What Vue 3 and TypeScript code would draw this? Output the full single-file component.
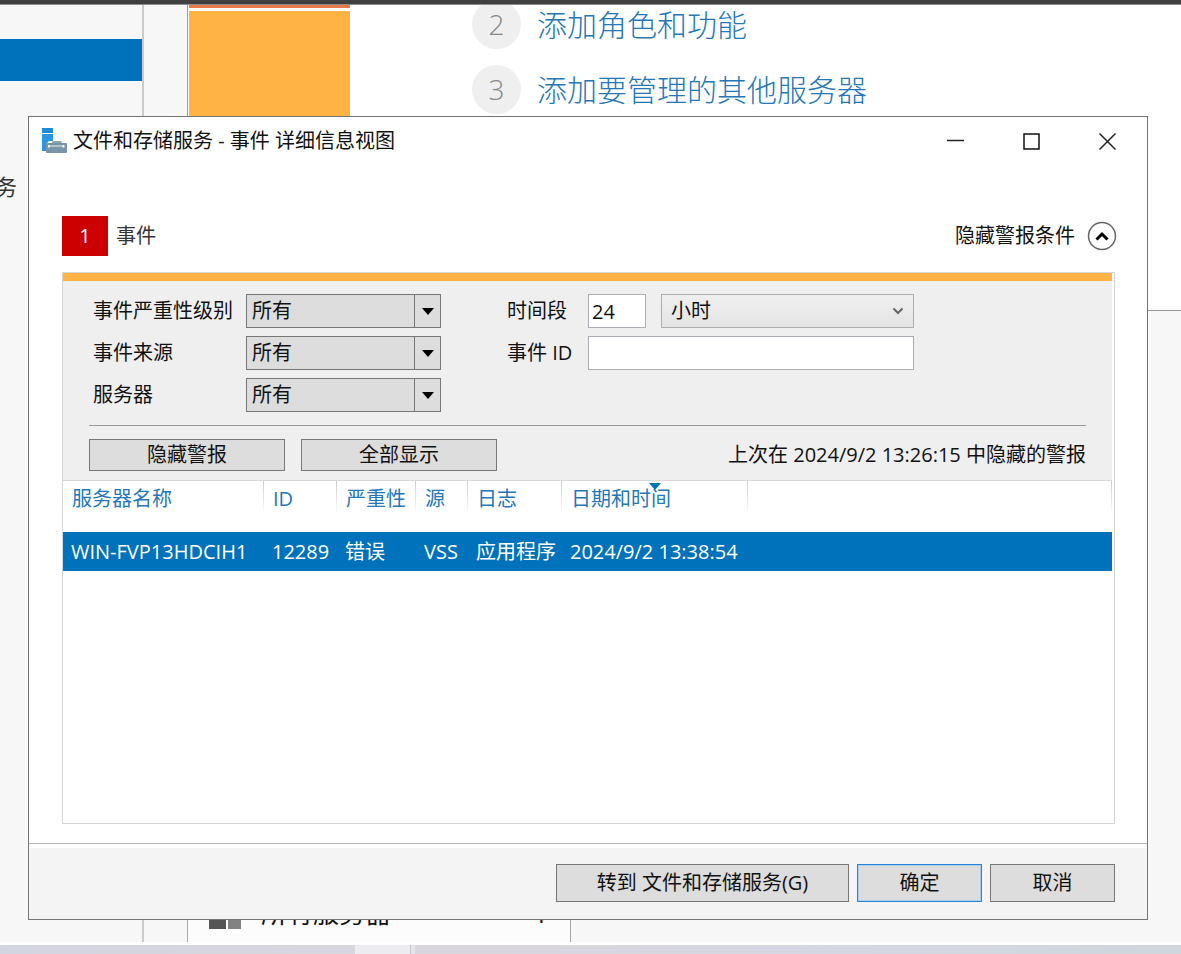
<script setup lang="ts">
import { ref } from 'vue'

interface EventRow {
  server: string
  id: number
  severity: string
  source: string
  log: string
  time: string
}

const filters = [
  { id: 'severity', label: '事件严重性级别' },
  { id: 'source', label: '事件来源' },
  { id: 'server', label: '服务器' },
]
const steps = [
  { n: 2, text: '添加角色和功能' },
  { n: 3, text: '添加要管理的其他服务器' },
]
const rows: EventRow[] = [
  { server: 'WIN-FVP13HDCIH1', id: 12289, severity: '错误', source: 'VSS', log: '应用程序', time: '2024/9/2 13:38:54' },
]
const amount = ref('24')
const eventId = ref('')
</script>

<template>
  <div class="screen">
    <div class="topbar"></div>
    <div class="manager">
      <nav class="side">
        <div class="side-active"></div>
        <div class="side-item">务</div>
      </nav>
      <main class="dashboard">
        <section class="welcome">
          <div class="tiles">
            <div class="tile-red"></div>
            <div class="tile-orange"></div>
          </div>
          <ol class="steps">
            <li v-for="s in steps" :key="s.n">
              <span class="num">{{ s.n }}</span>
              <a href="#">{{ s.text }}</a>
            </li>
          </ol>
        </section>
        <section class="card">
          <svg width="32" height="32" viewBox="0 0 32 32" aria-hidden="true">
            <path d="M0 0h17v32H0z" fill="#555" />
            <path d="M19 0h13v32H19z" fill="#828282" />
          </svg>
          <span class="card-name">所有服务器</span>
          <span class="card-count">1</span>
        </section>
      </main>
    </div>
    <div class="taskbar"><div class="task"></div></div>

    <div class="dialog" role="dialog" aria-labelledby="dlg-title">
      <header class="titlebar">
        <svg class="app-icon" width="27" height="27" viewBox="0 0 27 27" aria-hidden="true">
          <path d="M1 0h11v5H1z" fill="#1f8ad6" />
          <path d="M1 6h11v7H8l-3 3v7H1z" fill="#2b95e0" />
          <path d="M11 15c0-1.500 1-2 2-2h6c1 0 2 .5 2 2z" fill="#8fa5b2" />
          <rect x="5" y="15" width="21" height="10" rx="1" fill="#7896a6" />
          <path d="M8 18h15" stroke="#c3d0d8" stroke-width="1.500" />
          <path d="M7 17h2v2.500H7zM21.500 17h2v2.500h-2z" fill="#f2f6f8" />
        </svg>
        <h1 id="dlg-title">文件和存储服务 - 事件 详细信息视图</h1>
        <div class="win-buttons">
          <button type="button" aria-label="最小化">
            <svg width="17" height="17" viewBox="0 0 17 17"><path d="M0 7.500h17" stroke="#222" stroke-width="1.500" /></svg>
          </button>
          <button type="button" aria-label="最大化">
            <svg width="17" height="17" viewBox="0 0 17 17"><path d="M1 1h15v15H1z" fill="none" stroke="#111" stroke-width="1.500" /></svg>
          </button>
          <button type="button" aria-label="关闭">
            <svg width="17" height="17" viewBox="0 0 17 17"><path d="M.5.5l16 16M16.500.5l-16 16" stroke="#222" stroke-width="1.500" /></svg>
          </button>
        </div>
      </header>

      <div class="body">
        <div class="summary">
          <span class="badge">1</span>
          <h2>事件</h2>
          <button type="button" class="toggle">
            隐藏警报条件
            <svg width="30" height="30" viewBox="0 0 30 30" aria-hidden="true">
              <circle cx="15" cy="15" r="13.500" fill="#fff" stroke="#666" stroke-width="1.500" />
              <path d="M9.500 18.500l5.500-5.500 5.500 5.500" fill="none" stroke="#000" stroke-width="3" />
            </svg>
          </button>
        </div>

        <div class="panel">
          <form class="filter" @submit.prevent>
            <div class="fields">
              <div class="col-left">
                <template v-for="f in filters" :key="f.id">
                  <label :for="f.id">{{ f.label }}</label>
                  <div class="combo">
                    <select :id="f.id"><option>所有</option></select>
                    <span class="drop">
                      <svg width="12" height="7" viewBox="0 0 12 7" aria-hidden="true"><path d="M0 0h12L6 7z" fill="#000" /></svg>
                    </span>
                  </div>
                </template>
              </div>
              <div class="col-right">
                <label for="amount">时间段</label>
                <input id="amount" v-model="amount" type="text" class="box" />
                <div class="combo soft">
                  <select aria-label="时间单位"><option>小时</option></select>
                  <span class="drop">
                    <svg width="12" height="8" viewBox="0 0 12 8" aria-hidden="true"><path d="M1.500 1.500L6 6l4.500-4.500" fill="none" stroke="#666" stroke-width="2" /></svg>
                  </span>
                </div>
                <label for="eid">事件 ID</label>
                <input id="eid" v-model="eventId" type="text" class="box wide" />
              </div>
            </div>
            <div class="actions">
              <button type="button" class="btn">隐藏警报</button>
              <button type="button" class="btn">全部显示</button>
              <p>上次在 2024/9/2 13:26:15 中隐藏的警报</p>
            </div>
          </form>

          <table>
            <colgroup>
              <col class="c-server" /><col class="c-id" /><col class="c-sev" /><col class="c-src" />
              <col class="c-log" /><col class="c-time" /><col />
            </colgroup>
            <thead>
              <tr>
                <th scope="col">服务器名称</th>
                <th scope="col">ID</th>
                <th scope="col">严重性</th>
                <th scope="col">源</th>
                <th scope="col">日志</th>
                <th scope="col" aria-sort="descending">
                  日期和时间
                  <svg class="sort" width="12" height="7" viewBox="0 0 12 7" aria-hidden="true"><path d="M0 0h12L6 7z" fill="#0072bc" /></svg>
                </th>
                <th></th>
              </tr>
            </thead>
            <tbody>
              <tr v-for="r in rows" :key="r.id">
                <td>{{ r.server }}</td>
                <td>{{ r.id }}</td>
                <td>{{ r.severity }}</td>
                <td>{{ r.source }}</td>
                <td>{{ r.log }}</td>
                <td>{{ r.time }}</td>
                <td></td>
              </tr>
            </tbody>
          </table>
        </div>
      </div>

      <footer class="footer">
        <button type="button" class="btn goto">转到 文件和存储服务(G)</button>
        <button type="button" class="btn primary">确定</button>
        <button type="button" class="btn">取消</button>
      </footer>
    </div>
  </div>
</template>

<style>
body {
  margin: 0;
}
</style>

<style scoped>
* {
  box-sizing: border-box;
}
.screen {
  position: relative;
  display: flex;
  flex-direction: column;
  height: 100vh;
  overflow: hidden;
  background: #fff;
  color: #111;
  font: 20px/28px 'Open Sans', 'Noto Sans CJK SC', sans-serif;
}
.topbar {
  height: 5px;
  background: #404040;
  border-bottom: 1px solid #8c8c8c;
}
.manager {
  flex: 1;
  display: flex;
  min-height: 0;
  margin-bottom: 3px;
  background: #f7f7f7;
}
.side {
  width: 144px;
  padding-top: 34px;
  border-right: 2px solid #cbcbcb;
}
.side-active {
  height: 42px;
  background: #0072bc;
}
.side-item {
  display: flex;
  justify-content: flex-end;
  width: 17px;
  margin-top: 91px;
  overflow: hidden;
  font-size: 22px;
  color: #333;
}
.dashboard {
  flex: 1;
  display: flex;
  flex-direction: column;
  justify-content: space-between;
  margin-left: 43px;
}
.welcome {
  display: flex;
  height: 306px;
  overflow: hidden;
  background: #fff;
  border-left: 1px solid #999;
  border-bottom: 1px solid #999;
}
.tiles {
  display: flex;
  flex-direction: column;
  gap: 3px;
  width: 162px;
  padding-left: 1px;
}
.tile-red {
  height: 3px;
  background: #e8794a;
}
.tile-orange {
  flex: 1;
  background: #ffb344;
}
.steps {
  display: flex;
  flex-direction: column;
  gap: 16px;
  margin: -5px 0 0 122px;
  padding: 0;
  list-style: none;
}
.steps li {
  display: flex;
  align-items: center;
  gap: 16px;
}
.num {
  width: 49px;
  height: 49px;
  border-radius: 50%;
  background: #efefef;
  color: #888;
  font-size: 28px;
  font-weight: 300;
  line-height: 49px;
  text-align: center;
}
.steps a {
  color: #2577b8;
  font-size: 30px;
  font-weight: 300;
  line-height: 40px;
  text-decoration: none;
}
.card {
  display: flex;
  align-items: center;
  width: 384px;
  height: 60px;
  padding: 2px 22px 0 21px;
  border: solid #aaa;
  border-width: 0 1px;
  background: #fcfcfc;
  font-size: 26px;
}
.card-name {
  margin-left: 20px;
}
.card-count {
  margin-left: auto;
}
.taskbar {
  height: 9px;
  padding-left: 355px;
  background: linear-gradient(90deg, #d3d5e0, #dad6de 40%, #d5d7e2 70%, #d0d6dc);
}
.task {
  width: 60px;
  height: 9px;
  background: #ededf1;
  box-shadow: inset -4px 0 #e4e4ea, inset -5px 0 #c4c4cc;
}

.dialog {
  position: absolute;
  inset: 116px 33px 34px 28px;
  display: flex;
  flex-direction: column;
  border: 1px solid #747474;
  background: #fff;
}
.titlebar {
  display: flex;
  align-items: center;
  height: 48px;
  padding: 0 2px 0 12px;
}
.titlebar h1 {
  margin: 0 0 0 5px;
  font-size: 20px;
  font-weight: 400;
}
.win-buttons {
  display: flex;
  margin-left: auto;
}
.win-buttons button {
  display: grid;
  place-items: center;
  width: 76px;
  height: 48px;
  padding: 0;
  border: 0;
  background: none;
}
.body {
  flex: 1;
  display: flex;
  flex-direction: column;
  padding: 51px 32px 19px 33px;
}
.summary {
  display: flex;
  align-items: center;
  height: 40px;
  margin: 0 -2px 16px 0;
}
.badge {
  width: 46px;
  height: 40px;
  background: #c00;
  color: #fff;
  line-height: 40px;
  text-align: center;
}
.summary h2 {
  margin: 0 0 0 8px;
  font-size: 20px;
  font-weight: 400;
  color: #333;
}
.toggle {
  display: flex;
  align-items: center;
  gap: 12px;
  margin-left: auto;
  padding: 0;
  border: 0;
  background: none;
  color: inherit;
  font: inherit;
}
.panel {
  flex: 1;
  border: 1px solid #d5d5d5;
  padding-right: 2px;
}
.filter {
  padding: 13px 26px 9px;
  border-top: 8px solid #ffb344;
  border-bottom: 1px solid #d8d8d8;
  background: #efefef;
}
.fields {
  display: flex;
  gap: 66px;
  padding: 0 0 13px 4px;
  border-bottom: 1px solid #999;
}
.col-left,
.col-right {
  display: grid;
  align-content: start;
  align-items: center;
  gap: 8px 0;
  grid-auto-rows: 34px;
}
.col-left {
  grid-template-columns: 153px 195px;
}
.col-right {
  grid-template-columns: 81px 58px 15px 253px;
}
.col-right .combo {
  grid-column: 4;
}
.combo {
  position: relative;
  height: 34px;
}
.combo select {
  width: 100%;
  height: 100%;
  padding: 0 30px 0 5px;
  border: 1px solid #777;
  border-radius: 0;
  appearance: none;
  background: #ddd;
  color: inherit;
  font: inherit;
}
.drop {
  position: absolute;
  inset: 1px 1px 1px auto;
  display: grid;
  place-items: center;
  width: 26px;
  border-left: 1px solid #777;
  pointer-events: none;
}
.combo.soft select {
  padding-left: 9px;
  border-color: #adadad;
  background: linear-gradient(#efefef, #e4e4e4);
}
.soft .drop {
  width: 30px;
  border: 0;
}
.box {
  width: 100%;
  height: 34px;
  padding: 0 3px;
  border: 1px solid #abadb3;
  border-radius: 0;
  background: #fff;
  color: inherit;
  font: inherit;
}
.wide {
  grid-column: 2 / 5;
}
.actions {
  display: flex;
  align-items: center;
  gap: 16px;
  margin-top: 13px;
}
.actions p {
  margin: 0 0 0 auto;
}
.btn {
  width: 196px;
  height: 32px;
  padding: 0;
  border: 1px solid #777;
  border-radius: 0;
  background: #ddd;
  color: inherit;
  font: inherit;
}
table {
  width: 100%;
  table-layout: fixed;
  border-collapse: collapse;
}
.c-server { width: 201px; }
.c-id { width: 73px; }
.c-sev { width: 79px; }
.c-src { width: 52px; }
.c-log { width: 94px; }
.c-time { width: 186px; }
th {
  position: relative;
  height: 51px;
  padding: 0 0 16px 9px;
  background: linear-gradient(#ccc, #fff) no-repeat right top / 1px 34px;
  color: #2577b8;
  font-weight: 400;
  text-align: left;
  white-space: nowrap;
}
.sort {
  position: absolute;
  top: 2px;
  left: 87px;
}
td {
  height: 39px;
  padding: 0 0 0 8px;
  color: #fff;
  white-space: nowrap;
}
tbody tr {
  background: #0072bc;
}
.footer {
  display: flex;
  justify-content: flex-end;
  gap: 8px;
  padding: 15px 32px 17px;
  border-top: 1px solid #b4b4b4;
  background: #f4f4f4;
  box-shadow: inset 0 4px #fff;
}
.footer .btn {
  width: 125px;
  height: 38px;
  margin-top: 5px;
}
.footer .goto {
  width: 293px;
}
.footer .primary {
  border-color: #2a84cf;
  box-shadow: inset 0 0 0 1px #a9cdee;
}
</style>
